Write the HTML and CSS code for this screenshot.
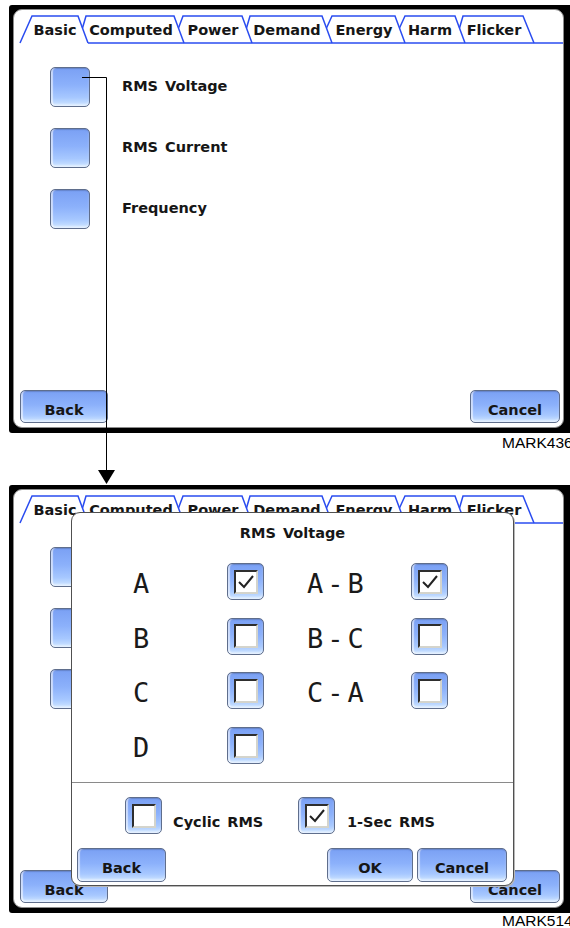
FILE: index.html
```html
<!DOCTYPE html>
<html lang="en">
<head>
    <meta charset="UTF-8">
    <meta name="viewport" content="width=device-width, initial-scale=1.0">
    <title>RMS Voltage setup</title>
    <link rel="stylesheet" href="styles.css">
</head>
<body>
<div class="page">

<div class="frame">
    <div class="screen">
        <div class="tabs">
            <svg class="tab-lines" width="549" height="34" viewBox="0 0 549 34">
                <path d="M6 33 L18 6 H64 L74 33"/>
                <path d="M68.5 18 L72 6 H160 L170 33"/>
                <path d="M164.5 18 L169 6 H228 L238 33"/>
                <path d="M232.5 18 L236 6 H308 L318 33"/>
                <path d="M312.5 18 L318 6 H381 L391 33"/>
                <path d="M385.5 18 L391 6 H441 L451 33"/>
                <path d="M445.5 18 L449 6 H509 L520 33"/>
                <path d="M74 33 H549"/>
            </svg>
            <span class="tab tab-basic">Basic</span>
            <span class="tab tab-computed">Computed</span>
            <span class="tab tab-power">Power</span>
            <span class="tab tab-demand">Demand</span>
            <span class="tab tab-energy">Energy</span>
            <span class="tab tab-harm">Harm</span>
            <span class="tab tab-flicker">Flicker</span>
        </div>
        <div class="menu">
            <div class="menu-row"><span class="sq-btn"></span><span class="menu-label">RMS Voltage</span></div>
            <div class="menu-row"><span class="sq-btn"></span><span class="menu-label">RMS Current</span></div>
            <div class="menu-row"><span class="sq-btn"></span><span class="menu-label">Frequency</span></div>
        </div>
        <div class="screen-foot">
            <button class="btn btn-back">Back</button>
            <button class="btn btn-cancel">Cancel</button>
        </div>
    </div>
</div>
<div class="caption">MARK436</div>

<div class="frame frame-second">
    <div class="screen">
        <div class="tabs">
            <svg class="tab-lines" width="549" height="34" viewBox="0 0 549 34">
                <path d="M6 33 L18 6 H64 L74 33"/>
                <path d="M68.5 18 L72 6 H160 L170 33"/>
                <path d="M164.5 18 L169 6 H228 L238 33"/>
                <path d="M232.5 18 L236 6 H308 L318 33"/>
                <path d="M312.5 18 L318 6 H381 L391 33"/>
                <path d="M385.5 18 L391 6 H441 L451 33"/>
                <path d="M445.5 18 L449 6 H509 L520 33"/>
                <path d="M74 33 H549"/>
            </svg>
            <span class="tab tab-basic">Basic</span>
            <span class="tab tab-computed">Computed</span>
            <span class="tab tab-power">Power</span>
            <span class="tab tab-demand">Demand</span>
            <span class="tab tab-energy">Energy</span>
            <span class="tab tab-harm">Harm</span>
            <span class="tab tab-flicker">Flicker</span>
        </div>
        <!-- labels sit under the dialog here, only the buttons' edges show -->
        <div class="menu">
            <div class="menu-row"><span class="sq-btn"></span></div>
            <div class="menu-row"><span class="sq-btn"></span></div>
            <div class="menu-row"><span class="sq-btn"></span></div>
        </div>
        <div class="screen-foot">
            <button class="btn btn-back">Back</button>
            <button class="btn btn-cancel">Cancel</button>
        </div>

        <div class="dialog">
            <div class="dialog-title">RMS Voltage</div>
            <div class="phase-grid">
                <span class="phase">A</span>
                <span class="check"><span class="check-box"><svg viewBox="0 0 20 20" width="20" height="20"><polyline points="3,10 8,15 17,4"/></svg></span></span>
                <span class="phase">A-B</span>
                <span class="check"><span class="check-box"><svg viewBox="0 0 20 20" width="20" height="20"><polyline points="3,10 8,15 17,4"/></svg></span></span>

                <span class="phase">B</span>
                <span class="check"><span class="check-box"></span></span>
                <span class="phase">B-C</span>
                <span class="check"><span class="check-box"></span></span>

                <span class="phase">C</span>
                <span class="check"><span class="check-box"></span></span>
                <span class="phase">C-A</span>
                <span class="check"><span class="check-box"></span></span>

                <span class="phase">D</span>
                <span class="check"><span class="check-box"></span></span>
            </div>
            <div class="dialog-options">
                <div class="option option-cyclic">
                    <span class="check"><span class="check-box"></span></span>
                    <span class="option-label">Cyclic RMS</span>
                </div>
                <div class="option">
                    <span class="check"><span class="check-box"><svg viewBox="0 0 20 20" width="20" height="20"><polyline points="3,10 8,15 17,4"/></svg></span></span>
                    <span class="option-label">1-Sec RMS</span>
                </div>
            </div>
            <div class="dialog-foot">
                <button class="btn btn-dlg-back">Back</button>
                <div class="btn-group">
                    <button class="btn btn-ok">OK</button>
                    <button class="btn btn-dlg-cancel">Cancel</button>
                </div>
            </div>
        </div>
    </div>
</div>
<div class="caption caption-last">MARK514</div>

<svg class="connector" width="570" height="928" viewBox="0 0 570 928">
    <path d="M82 77.5 H106.5 V471"/>
    <polygon points="98,470 115,470 106.5,484"/>
</svg>

</div>
</body>
</html>
```

FILE: styles.css
```css
html, body {
    margin: 0;
    overflow: hidden;
    background: #fff;
}
.page {
    position: relative;
    width: 570px;
    height: 928px;
    overflow: hidden;
    font-family: "DejaVu Sans", sans-serif;
    font-weight: bold;
    font-size: 14.5px;
    color: #161616;
}

/* black bezel round each screen */
.frame {
    width: 551px;
    margin: 5px 0 0 9px;
    padding: 4px 10px 5px 4px;
    background: #000;
    border-radius: 3px;
}
.frame-second { margin-top: 34px; }
.screen {
    position: relative;
    height: 417px;
    display: flex;
    flex-direction: column;
    background: #fff;
    border: 1px solid #8c8c8c;
    border-radius: 9px;
}

/* tab strip */
.tabs {
    position: relative;
    height: 34px;
    display: flex;
    padding-left: 12px;
}
.tab-lines {
    position: absolute;
    left: 0;
    top: 0;
}
.tab-lines path {
    fill: none;
    stroke: #2a4cf0;
    stroke-width: 1.5;
}
.tab {
    padding-top: 12px;
    line-height: 16px;
    text-align: center;
}
.tab-basic { width: 58px; }
.tab-computed { width: 94px; }
.tab-power { width: 70px; }
.tab-demand { width: 78px; }
.tab-energy { width: 76px; }
.tab-harm { width: 56px; }
.tab-flicker { width: 72px; }

/* main menu */
.menu {
    display: flex;
    flex-direction: column;
    gap: 21px;
    padding: 23px 0 0 36px;
}
.menu-row {
    display: flex;
    align-items: center;
    gap: 32px;
}
.menu-label {
    line-height: 16px;
    margin-bottom: 3px;
    word-spacing: 2px;
}

.sq-btn, .btn, .check {
    box-sizing: border-box;
    border: 1px solid #5f6e8c;
    border-radius: 5px;
    background: linear-gradient(#7aa0f4, #8cb1fb 45%, #a7c8ff 78%, #cfe6ff);
    box-shadow: inset 2px 0 1px rgba(255, 255, 255, 0.55), inset 0 -2px 2px rgba(255, 255, 255, 0.45), inset 0 1px 1px rgba(40, 60, 120, 0.35);
}
.sq-btn {
    width: 40px;
    height: 40px;
}

.screen-foot {
    margin-top: auto;
    display: flex;
    justify-content: space-between;
    padding: 0 3px 4px 6px;
}
.btn {
    height: 33px;
    padding: 6px 0 0;
    font: inherit;
    line-height: 16px;
    color: #161616;
    text-align: center;
    cursor: pointer;
}
.btn-back { width: 88px; }
.btn-cancel { width: 90px; }

/* dialog */
.dialog {
    position: absolute;
    left: 57px;
    top: 22px;
    width: 441px;
    height: 372px;
    display: flex;
    flex-direction: column;
    background: #fff;
    border: 1px solid #505050;
    border-radius: 9px;
    box-shadow: 1px 1px 0 #b8b8b8;
}
.dialog-title {
    padding-top: 12px;
    line-height: 16px;
    text-align: center;
    word-spacing: 2px;
}
.phase-grid {
    display: grid;
    grid-template-columns: 94px 80px 104px 37px;
    grid-auto-rows: 37px;
    row-gap: 17.7px;
    margin-top: 22px;
    padding-left: 61px;
}
.phase {
    padding-top: 5px;
    font-family: "DejaVu Sans Mono", monospace;
    font-weight: normal;
    font-size: 27px;
    line-height: 32px;
    letter-spacing: 4px;
    color: #1a1a1a;
}
.check {
    width: 37px;
    height: 37px;
    display: flex;
    align-items: center;
    justify-content: center;
}
.check-box {
    box-sizing: border-box;
    width: 24px;
    height: 24px;
    background: #fff;
    border: 2px solid;
    border-color: #2e2e2e #d4d4cc #d4d4cc #2e2e2e;
}
.check-box svg {
    display: block;
}
.check-box polyline {
    fill: none;
    stroke: #222;
    stroke-width: 2;
}

.dialog-options {
    display: flex;
    margin-top: 18px;
    padding: 14px 0 0 53px;
    border-top: 1px solid #8a8a8a;
}
.option {
    display: flex;
    align-items: flex-start;
    gap: 12px;
}
.option-cyclic {
    width: 173px;
    gap: 11px;
}
.option-label {
    margin-top: 17px;
    line-height: 16px;
    word-spacing: 2px;
}

.dialog-foot {
    display: flex;
    justify-content: space-between;
    margin-top: 14px;
    padding: 0 6px 0 5px;
}
.btn-group {
    display: flex;
    gap: 4px;
}
.dialog-foot .btn { height: 34px; }
.btn-dlg-back { width: 89px; }
.btn-ok { width: 86px; }
.btn-dlg-cancel { width: 90px; }

/* figure labels */
.caption {
    margin-top: 1px;
    padding-left: 502px;
    white-space: nowrap;
    font-family: "Liberation Sans", Arial, sans-serif;
    font-weight: normal;
    font-size: 15.5px;
    line-height: 17px;
    color: #000;
}
.caption-last { margin-top: -1px; }

/* arrow from the first menu button down to the dialog screen */
.connector {
    position: absolute;
    left: 0;
    top: 0;
    pointer-events: none;
}
.connector path {
    fill: none;
    stroke: #000;
    stroke-width: 1;
}
.connector polygon { fill: #000; }
```
